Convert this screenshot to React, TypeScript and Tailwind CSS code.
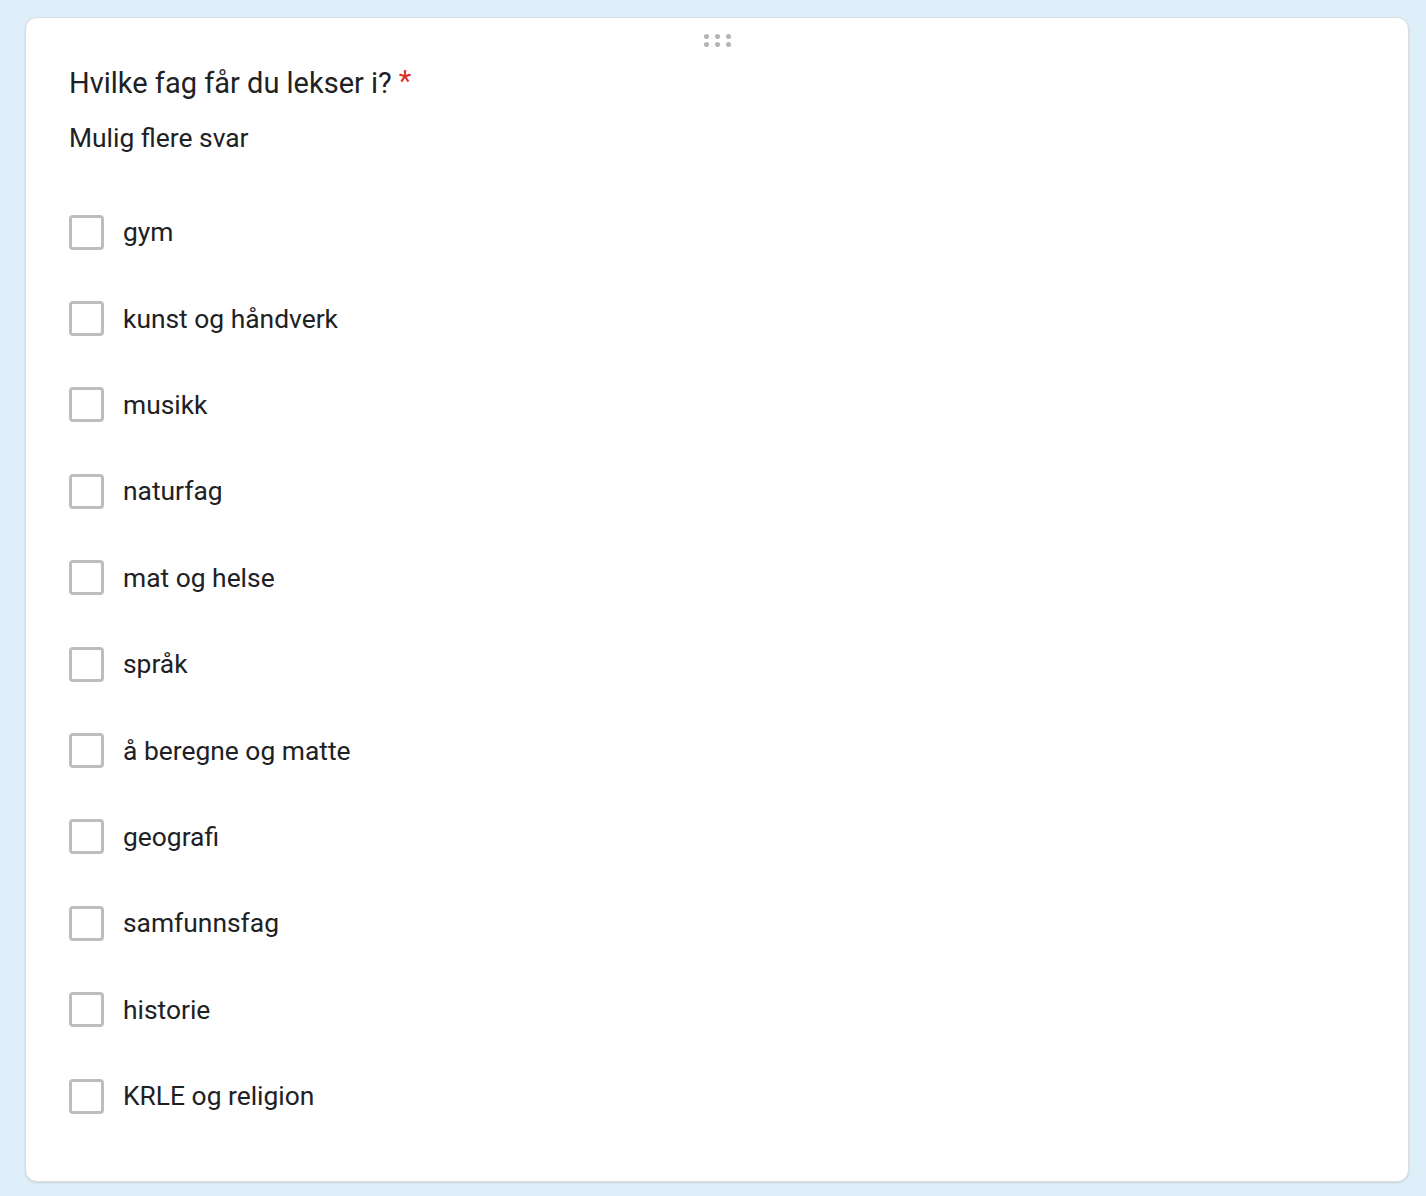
const options = [
  "gym",
  "kunst og håndverk",
  "musikk",
  "naturfag",
  "mat og helse",
  "språk",
  "å beregne og matte",
  "geografi",
  "samfunnsfag",
  "historie",
  "KRLE og religion",
];

const DragHandle = () => (
  <div className="flex justify-center pt-[15.5px]">
    <div className="grid grid-cols-3 gap-x-[6px] gap-y-[3.5px]">
      {Array.from({ length: 6 }).map((_, i) => (
        <span key={i} className="block h-[5px] w-[5px] rounded-full bg-[#b4b4b4]" />
      ))}
    </div>
  </div>
);

export default function App() {
  return (
    <div
      className="min-h-screen bg-[#dfeff9] pl-[25px] pr-[17px] pt-[17px] pb-[14px] text-[#202124]"
      style={{ fontFamily: "Roboto, 'Liberation Sans', Arial, sans-serif" }}
    >
      <div className="rounded-[12px] border border-[#dadce0] bg-white pb-[42px] shadow-[0_1px_2px_rgba(60,64,67,0.15)]">
        <DragHandle />
        <div className="px-[43px]">
          <h2 className="mt-[15.5px] text-[29px] font-normal leading-[40px]">
            Hvilke fag får du lekser i?
            <span className="relative -top-[2px] pl-[7px] text-[#d93025]">*</span>
          </h2>
          <p className="mt-[17.5px] text-[26.4px] leading-[36px]">Mulig flere svar</p>
          <ul className="mt-[33px]">
            {options.map((opt) => (
              <li key={opt} className="flex h-[86.4px] items-center gap-[19px]">
                <span className="block h-[35px] w-[35px] shrink-0 rounded-[4px] border-[3.5px] border-[#bdbdbd] bg-white" />
                <span className="text-[26.4px] leading-[36px]">{opt}</span>
              </li>
            ))}
          </ul>
        </div>
      </div>
    </div>
  );
}
